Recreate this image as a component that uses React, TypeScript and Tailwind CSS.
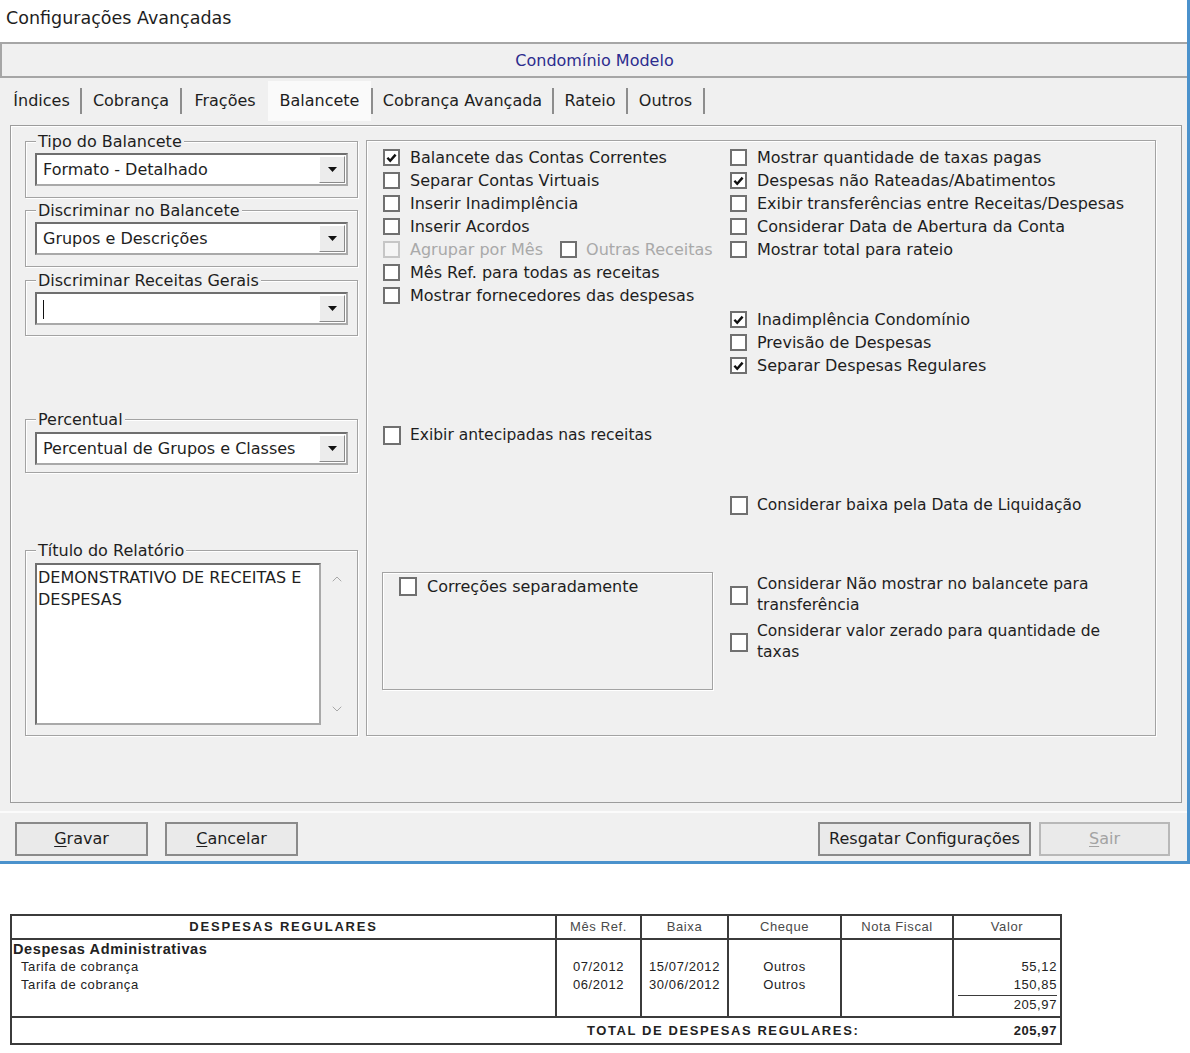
import { ChevronUp, ChevronDown } from "lucide-react";

function Tick() {
  return (
    <svg width="11" height="10" viewBox="0 0 11 10">
      <path d="M1.4 4.8 L4.2 7.8 L9.6 1.6" fill="none" stroke="#111" strokeWidth="2.4" />
    </svg>
  );
}

function Box({ checked, disabled, big }: { checked?: boolean; disabled?: boolean; big?: boolean }) {
  const size = big ? "h-[19px] w-[18px]" : "h-[17px] w-[17px]";
  const tone = disabled ? "border-[#c6c6c6] bg-[#f5f5f5]" : "border-[#707070] bg-white";
  return (
    <span className={`flex shrink-0 items-center justify-center border-2 ${size} ${tone}`}>
      {checked && <Tick />}
    </span>
  );
}

function Check({
  label,
  checked,
  disabled,
  big,
  text = "",
}: {
  label: string;
  checked?: boolean;
  disabled?: boolean;
  big?: boolean;
  text?: string;
}) {
  return (
    <div className="flex h-[23px] items-center gap-[10px]">
      <Box checked={checked} disabled={disabled} big={big} />
      <span className={`whitespace-nowrap ${disabled ? "text-[#a9a9a9]" : ""} ${text}`}>{label}</span>
    </div>
  );
}

function Group({ label, className = "", children }: { label: string; className?: string; children: React.ReactNode }) {
  return (
    <div className={`border border-[#a3a3a3] px-[9px] shadow-[inset_1px_1px_0_#ffffff,1px_1px_0_#ffffff] ${className}`}>
      <div className="-mt-[11px] ml-[1px] w-fit bg-[#f0f0f0] px-[2px] leading-[21px]">{label}</div>
      {children}
    </div>
  );
}

function Select({ value, caret, className = "" }: { value?: string; caret?: boolean; className?: string }) {
  return (
    <div
      className={`flex h-[33px] items-center border-2 border-[#6f6f6f] border-b-[#a9a9a9] border-r-[#a9a9a9] bg-white pl-[6px] pr-[1px] ${className}`}
    >
      <span className="flex-1 whitespace-nowrap">
        {caret ? <span className="inline-block h-[19px] w-[1px] bg-[#111] align-middle" /> : value}
      </span>
      <span className="flex h-[27px] w-[26px] items-center justify-center border border-white border-b-[#8a8a8a] border-r-[#8a8a8a] bg-[#ececec]">
        <svg width="9" height="5" viewBox="0 0 9 5">
          <path d="M0 0 H9 L4.5 5 Z" fill="#111" />
        </svg>
      </span>
    </div>
  );
}

function Tab({ label, w, active }: { label: string; w: string; active?: boolean }) {
  return (
    <div
      className={`flex items-center justify-center ${w} ${active ? "h-[40px] bg-[#fafafa]" : "h-[30px]"}`}
    >
      {label}
    </div>
  );
}

function Sep() {
  return <div className="h-[26px] w-[2px] bg-[#8d8d8d]" />;
}

function Button({ label, u, w, disabled }: { label: string; u: string; w: string; disabled?: boolean }) {
  return (
    <div
      className={`flex h-[34px] items-center justify-center border-2 bg-[#eaeaea] ${w} ${
        disabled ? "border-[#b8b8b8] text-[#a3a3a3]" : "border-[#8a8a8a]"
      }`}
    >
      <span>
        <span className="underline underline-offset-2">{u}</span>
        {label}
      </span>
    </div>
  );
}

export default function App() {
  return (
    <div className="h-[1053px] w-[1190px] overflow-hidden bg-white font-['DejaVu_Sans',sans-serif] text-[16px] text-[#1e1e1e]">
      {/* window */}
      <div className="border-b-[3px] border-r-[3px] border-[#4b92cc] bg-[#f0f0f0]">
        <div className="h-[42px] bg-white pl-[6px] pt-[5px] text-[17.5px] leading-[26px]">Configurações Avançadas</div>

        <div className="flex h-[36px] items-center justify-center border-2 border-r-0 border-[#a6a6a6] pt-[2px] text-[#2c2c8e]">
          Condomínio Modelo
        </div>

        {/* tabs */}
        <div className="flex h-[47px] items-center pb-[1px] pl-[3px]">
          <Tab label="Índices" w="w-[77px]" />
          <Sep />
          <Tab label="Cobrança" w="w-[98px]" />
          <Sep />
          <Tab label="Frações" w="w-[86px]" />
          <Tab label="Balancete" w="w-[103px]" active />
          <Sep />
          <Tab label="Cobrança Avançada" w="w-[179px]" />
          <Sep />
          <Tab label="Rateio" w="w-[72px]" />
          <Sep />
          <Tab label="Outros" w="w-[75px]" />
          <Sep />
        </div>

        {/* tab sheet */}
        <div className="ml-[10px] mr-[5px] flex h-[678px] items-start border border-[#9c9c9c] pl-[14px] pt-[14px] shadow-[inset_1px_1px_0_#ffffff]">
          <div className="mt-[1px] flex w-[333px] flex-col">
            <Group label="Tipo do Balancete" className="pb-[11px]">
              <Select value="Formato - Detalhado" className="mt-[1px]" />
            </Group>
            <Group label="Discriminar no Balancete" className="mt-[12px] pb-[11px]">
              <Select value="Grupos e Descrições" className="mt-[1px]" />
            </Group>
            <Group label="Discriminar Receitas Gerais" className="mt-[13px] pb-[10px]">
              <Select caret className="mt-[1px]" />
            </Group>
            <Group label="Percentual" className="mt-[83px] pb-[7px]">
              <Select value="Percentual de Grupos e Classes" className="mt-[2px]" />
            </Group>
            <Group label="Título do Relatório" className="mt-[77px] pb-[10px]">
              <div className="mt-[2px] flex h-[162px]">
                <div className="w-[286px] border-2 border-[#6f6f6f] border-b-[#a9a9a9] border-r-[#a9a9a9] bg-white pl-[1px] pt-[2px] leading-[22px]">
                  DEMONSTRATIVO DE RECEITAS E
                  <br />
                  DESPESAS
                </div>
                <div className="flex flex-1 flex-col items-center justify-between py-[8px] pl-[4px] text-[#a8a8a8]">
                  <ChevronUp size={16} strokeWidth={1.5} />
                  <ChevronDown size={16} strokeWidth={1.5} />
                </div>
              </div>
            </Group>
          </div>

          {/* right panel */}
          <div className="ml-[8px] flex h-[596px] w-[790px] border border-[#a3a3a3] pl-[16px] pt-[5px] shadow-[inset_1px_1px_0_#ffffff,1px_1px_0_#ffffff]">
            <div className="flex w-[347px] flex-col">
              <Check label="Balancete das Contas Correntes" checked />
              <Check label="Separar Contas Virtuais" />
              <Check label="Inserir Inadimplência" />
              <Check label="Inserir Acordos" />
              <div className="flex h-[23px] items-center">
                <Check label="Agrupar por Mês" disabled />
                <div className="ml-[17px] flex items-center gap-[9px]">
                  <Box />
                  <span className="text-[#a9a9a9]">Outras Receitas</span>
                </div>
              </div>
              <Check label="Mês Ref. para todas as receitas" />
              <Check label="Mostrar fornecedores das despesas" />
              <div className="mt-[117px]">
                <Check label="Exibir antecipadas nas receitas" big text="-ml-[1px] text-[15.5px]" />
              </div>
              <div className="-ml-[1px] mt-[125px] h-[118px] w-[331px] border border-[#a3a3a3] pl-[16px] pt-[2px] shadow-[inset_1px_1px_0_#ffffff,1px_1px_0_#ffffff]">
                <Check label="Correções separadamente" big />
              </div>
            </div>

            <div className="flex flex-col">
              <Check label="Mostrar quantidade de taxas pagas" />
              <Check label="Despesas não Rateadas/Abatimentos" checked />
              <Check label="Exibir transferências entre Receitas/Despesas" />
              <Check label="Considerar Data de Abertura da Conta" />
              <Check label="Mostrar total para rateio" />
              <div className="mt-[47px]">
                <Check label="Inadimplência Condomínio" checked />
                <Check label="Previsão de Despesas" />
                <Check label="Separar Despesas Regulares" checked />
              </div>
              <div className="mt-[117px]">
                <Check label="Considerar baixa pela Data de Liquidação" big text="-ml-[1px] text-[15.5px]" />
              </div>
              <div className="mt-[57px] flex items-center gap-[9px]">
                <Box big />
                <div className="text-[15.5px] leading-[21px]">
                  Considerar Não mostrar no balancete para
                  <br />
                  transferência
                </div>
              </div>
              <div className="mt-[5px] flex items-center gap-[9px]">
                <Box big />
                <div className="text-[15.5px] leading-[21px]">
                  Considerar valor zerado para quantidade de
                  <br />
                  taxas
                </div>
              </div>
            </div>
          </div>
        </div>

        {/* buttons */}
        <div className="mt-[8px] flex border-t-2 border-[#fbfbfb] pb-[5px] pl-[15px] pr-[17px] pt-[9px]">
          <Button u="G" label="ravar" w="w-[133px]" />
          <div className="ml-[17px]">
            <Button u="C" label="ancelar" w="w-[133px]" />
          </div>
          <div className="ml-auto">
            <Button u="" label="Resgatar Configurações" w="w-[213px]" />
          </div>
          <div className="ml-[8px]">
            <Button u="S" label="air" w="w-[131px]" disabled />
          </div>
        </div>
      </div>

      {/* report table */}
      <div className="ml-[10px] mt-[50px] w-[1052px] border-2 border-[#3b3b3b] font-['Liberation_Sans',Arial,sans-serif] text-[13px] tracking-[0.6px] text-[#222]">
        <div className="grid h-[24px] grid-cols-[543px_85px_87px_113px_112px_108px] border-b-2 border-[#3b3b3b] text-[#4a4a4a]">
          <div className="flex items-center justify-center font-bold tracking-[1.8px] text-[#222]">DESPESAS REGULARES</div>
          <div className="flex items-center justify-center border-l-2 border-[#3b3b3b]">Mês Ref.</div>
          <div className="flex items-center justify-center border-l-2 border-[#3b3b3b]">Baixa</div>
          <div className="flex items-center justify-center border-l-2 border-[#3b3b3b]">Cheque</div>
          <div className="flex items-center justify-center border-l-2 border-[#3b3b3b]">Nota Fiscal</div>
          <div className="flex items-center justify-center border-l-2 border-[#3b3b3b]">Valor</div>
        </div>
        <div className="grid h-[78px] grid-cols-[543px_85px_87px_113px_112px_108px] border-b-2 border-[#3b3b3b] leading-[18px]">
          <div className="pl-[1px]">
            <div className="text-[14.5px] font-bold tracking-[0.6px]">Despesas Administrativas</div>
            <div className="pl-[8px]">Tarifa de cobrança</div>
            <div className="pl-[8px]">Tarifa de cobrança</div>
          </div>
          <div className="border-l-2 border-[#3b3b3b] pt-[18px] text-center">
            <div>07/2012</div>
            <div>06/2012</div>
          </div>
          <div className="border-l-2 border-[#3b3b3b] pt-[18px] text-center">
            <div>15/07/2012</div>
            <div>30/06/2012</div>
          </div>
          <div className="border-l-2 border-[#3b3b3b] pt-[18px] text-center">
            <div>Outros</div>
            <div>Outros</div>
          </div>
          <div className="border-l-2 border-[#3b3b3b]" />
          <div className="border-l-2 border-[#3b3b3b] pr-[3px] pt-[18px] text-right">
            <div>55,12</div>
            <div>150,85</div>
            <div className="ml-[4px] mt-[1px] border-t border-[#3b3b3b]">205,97</div>
          </div>
        </div>
        <div className="flex h-[25px] items-center font-bold tracking-[1.6px]">
          <span className="ml-[575px]">TOTAL DE DESPESAS REGULARES:</span>
          <span className="ml-auto pr-[3px] tracking-[0.6px]">205,97</span>
        </div>
      </div>
    </div>
  );
}
